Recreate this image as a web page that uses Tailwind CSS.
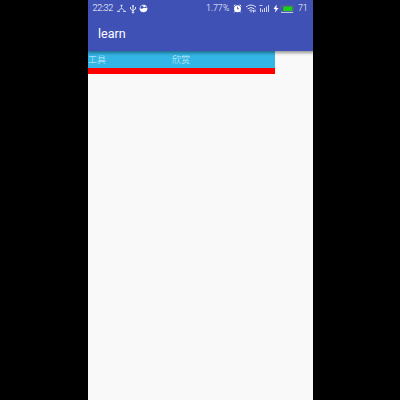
<!DOCTYPE html>
<html lang="zh">
<head>
<meta charset="utf-8">
<title>learn</title>
<script src="https://cdn.jsdelivr.net/npm/@tailwindcss/browser@4"></script>
</head>
<body class="bg-black overflow-hidden">
<div class="ml-[88px] w-[225px] h-[400px] bg-[#f9f9f9] flex flex-col font-['Roboto','Noto_Sans_CJK_SC',sans-serif]">
  <header class="relative z-10 h-[51px] shrink-0 bg-[#3f51b5] text-white shadow-[0_1px_3px_1px_rgba(0,0,0,0.4)] [clip-path:inset(0_0_-8px_0)]">
    <div class="h-[17px] pl-[4.5px] pr-[5px] flex items-center justify-between text-[9px] leading-[17px] font-light text-white">
      <div class="flex items-center">
        <span class="w-[21px] whitespace-nowrap tracking-[-0.3px]">22:32</span>
        <svg class="ml-[3px] w-[9px] h-[9px]" viewBox="0 0 9 9" fill="none" stroke="#dfe3f5" stroke-width="1"><path d="M3.5 1.3h2M4.5 1v2.5M4.5 4L2 6.5M4.5 4L7 6.5M0 7.3h3M6 7.3h3"/></svg>
        <svg class="ml-[3px] w-[8px] h-[10px]" viewBox="0 0 8 10" fill="none" stroke="#e6e9f8" stroke-width="1"><path d="M4 1v8M1.5 3v2L4 7M6.5 3v2L4 6.5M3 2h2"/><circle cx="4" cy="8.5" r=".7"/></svg>
        <svg class="ml-[2px] w-[9px] h-[9px]" viewBox="0 0 9 9"><circle cx="4.5" cy="4.5" r="3.6" fill="none" stroke="#cfd5ee" stroke-width=".7"/><path d="M.7 4.3L3 4.7L5 3.7L8.3 4.3A3.8 3.8 0 0 1 .7 4.3Z" fill="white"/><path d="M3 1.5L6 1l1 1.5-2 .7z" fill="white"/></svg>
      </div>
      <div class="flex items-center">
        <span class="w-[25px] whitespace-nowrap tracking-[-0.1px]">1.77<span class="inline-block origin-left scale-x-[0.95]">%</span></span>
        <svg class="ml-[2px] w-[9px] h-[9px]" viewBox="0 0 9 9"><circle cx="4.5" cy="4.7" r="3.5" fill="white"/><path d="M.8 2L2.3.7M8.2 2L6.7.7M2 7.4L1.2 8.4M7 7.4l.8 1" stroke="white"/><path d="M4.5 2.8v2h1.5" fill="none" stroke="#3f51b5" stroke-width=".9"/></svg>
        <svg class="ml-[4px] w-[10px] h-[9px]" viewBox="0 0 10 9" fill="none" stroke="#dfe3f5" stroke-width="1"><path d="M0 3Q5-1 10 3M1.7 4.8Q5 2.2 8.3 4.8M3.3 6.5Q5 5.2 6.7 6.5M5 7v1.3M7.5 6v2.5M9 5.5v2.5"/></svg>
        <svg class="ml-[3px] w-[11px] h-[9px]" viewBox="0 0 11 9" fill="none" stroke="#cfd5ee" stroke-width="1"><path d="M.5 1.5h3M1.5 4v4M3.5 5.5v2.5M5.5 4v4M7.5 2.5v5.5M9.5 1v7"/></svg>
        <svg class="ml-[3px] w-[6px] h-[9px]" viewBox="0 0 6 9"><path d="M3.5.5L.5 5h2L2 8.5 5.5 4H3.5z" fill="white"/></svg>
        <svg class="w-[15px] h-[8px]" viewBox="0 0 15 8"><path d="M2.5.7h12v6.6H2.5V5.2H1V2.5h1.5z" fill="none" stroke="#56677f" stroke-width=".9"/><path d="M2 7.4h12" stroke="#dbe1ef" stroke-width=".9"/><path d="M4.3 1.5h9v4.5h-9z" fill="#20ce12"/></svg>
        <span class="ml-[4px] w-[10px] whitespace-nowrap tracking-[-0.2px]">71</span>
      </div>
    </div>
    <h1 class="pl-[10px] h-[34px] leading-[34px] text-[12.5px] font-normal">learn</h1>
  </header>
  <nav class="w-[187px] h-[23px] shrink-0 bg-[#33b5e5] border-b-[6px] border-[#ff0000] flex text-[9px] leading-[18px] text-[#d7f1fb] font-light">
    <span class="w-[84px]">工具</span>
    <span>欣赏</span>
  </nav>
  <main class="flex-1"></main>
</div>
</body>
</html>
